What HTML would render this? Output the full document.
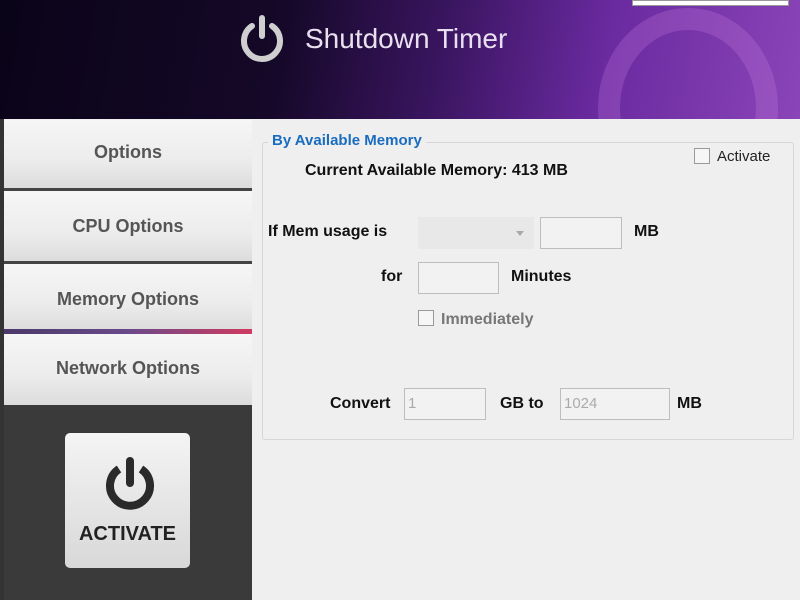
<!DOCTYPE html>
<html><head><style>
body{margin:0;width:800px;height:600px;overflow:hidden;background:#efefef;font-family:"Liberation Sans",sans-serif;position:relative}
.a{position:absolute}
.hdr{left:0;top:0;width:800px;height:119px;background:linear-gradient(100deg,#0a0418 0%,#150828 35%,#3a1560 55%,#6a2aa0 75%,#8a45b8 100%)}
.tab{left:4px;width:248px;background:linear-gradient(#f6f6f6,#ececec 60%,#dcdcdc);color:#555;font-weight:bold;font-size:18px;text-align:center}
.sep{left:4px;width:248px;height:3px;background:#444}
.in{background:#f2f2f2;border:1px solid #bdbdbd;font-size:15px;color:#aaa;padding-left:3px;box-sizing:border-box}
.lbl{font-weight:bold;font-size:16px;color:#111}
.cb{width:14px;height:14px;border:1px solid #999;background:#f6f6f6}
</style></head><body>
<div class="a" style="left:0;top:0;width:4px;height:600px;background:#333"></div>
<div class="a hdr"></div>
<div class="a" style="left:598px;top:8px;width:180px;height:200px;border-radius:50%;border:22px solid rgba(220,140,230,.22);box-sizing:border-box;clip-path:inset(0 0 89px 0)"></div>
<div class="a" style="left:632px;top:0;width:155px;height:4px;background:#fff;border:1px solid #999"></div>
<svg class="a" style="left:236px;top:14px" width="52" height="52" viewBox="0 0 52 52"><path d="M16 12 A18 18 0 1 0 36 12" fill="none" stroke="#cfcfcf" stroke-width="6" stroke-linecap="round"/><line x1="26" y1="4" x2="26" y2="22" stroke="#cfcfcf" stroke-width="6" stroke-linecap="round"/></svg>
<div class="a" style="left:305px;top:23px;color:#e8e0ee;font-size:28px">Shutdown Timer</div>

<div class="a tab" style="top:120px;height:68px;line-height:64px">Options</div>
<div class="a sep" style="top:188px"></div>
<div class="a tab" style="top:191px;height:71px;line-height:70px">CPU Options</div>
<div class="a sep" style="top:261px"></div>
<div class="a tab" style="top:264px;height:66px;line-height:70px">Memory Options</div>
<div class="a" style="left:4px;top:329px;width:248px;height:5px;background:linear-gradient(90deg,#4a3a6a,#6a4a8a 50%,#d03a60)"></div>
<div class="a tab" style="top:334px;height:71px;line-height:68px">Network Options</div>
<div class="a" style="left:4px;top:405px;width:248px;height:195px;background:#3a3a3a"></div>
<div class="a" style="left:65px;top:433px;width:125px;height:135px;border-radius:5px;background:linear-gradient(#f4f4f4,#d8d8d8)"></div>
<svg class="a" style="left:102px;top:455px" width="56" height="60" viewBox="0 0 56 60"><path d="M17 14 A20 20 0 1 0 39 14" fill="none" stroke="#2a2a2a" stroke-width="8"/><line x1="28" y1="6" x2="28" y2="28" stroke="#2a2a2a" stroke-width="8" stroke-linecap="round"/></svg>
<div class="a" style="left:65px;top:523px;width:125px;text-align:center;font-weight:bold;font-size:20px;color:#222">ACTIVATE</div>

<div class="a" style="left:262px;top:142px;width:530px;height:296px;border:1px solid #d6d6d6;border-radius:3px"></div>
<div class="a" style="left:268px;top:132px;background:#efefef;padding:0 4px;color:#1a6cc0;font-weight:bold;font-size:15px">By Available Memory</div>
<div class="a cb" style="left:694px;top:148px"></div>
<div class="a" style="left:717px;top:148px;font-size:15px;color:#222">Activate</div>
<div class="a lbl" style="left:305px;top:162px">Current Available Memory: 413 MB</div>
<div class="a lbl" style="left:268px;top:223px">If Mem usage is</div>
<div class="a" style="left:418px;top:217px;width:116px;height:32px;background:#e8e8e8"></div>
<div class="a" style="left:516px;top:231px;border:4px solid transparent;border-top:5px solid #aaa"></div>
<div class="a in" style="left:540px;top:217px;width:82px;height:32px"></div>
<div class="a lbl" style="left:634px;top:223px">MB</div>
<div class="a lbl" style="left:381px;top:268px">for</div>
<div class="a in" style="left:418px;top:262px;width:81px;height:32px"></div>
<div class="a lbl" style="left:511px;top:268px">Minutes</div>
<div class="a cb" style="left:418px;top:310px"></div>
<div class="a lbl" style="left:441px;top:311px;color:#777">Immediately</div>
<div class="a lbl" style="left:330px;top:395px">Convert</div>
<div class="a in" style="left:404px;top:388px;width:82px;height:32px;line-height:30px">1</div>
<div class="a lbl" style="left:500px;top:395px">GB to</div>
<div class="a in" style="left:560px;top:388px;width:110px;height:32px;line-height:30px">1024</div>
<div class="a lbl" style="left:677px;top:395px">MB</div>
</body></html>
